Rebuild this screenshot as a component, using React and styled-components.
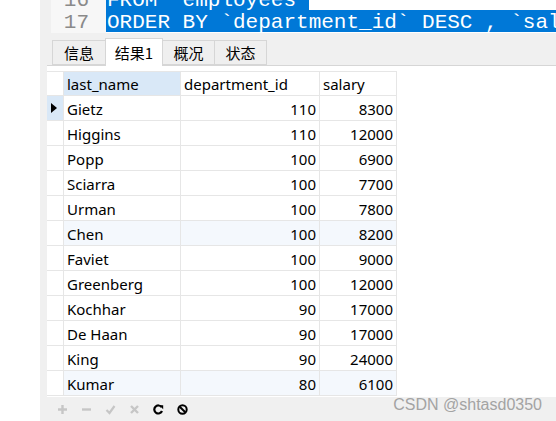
import React from "react";
import styled, { createGlobalStyle } from "styled-components";

const Global = createGlobalStyle`
  html, body { margin: 0; padding: 0; background: #ffffff; overflow: hidden; }
  #root { width: 556px; height: 421px; }
`;

const Page = styled.div`
  position: relative;
  display: flex;
  width: 556px;
  height: 421px;
  overflow: hidden;
  font-family: "Noto Sans", "Noto Sans CJK SC", sans-serif;
`;

const LeftPane = styled.div`
  width: 40px;
  flex: none;
  background: #ffffff;
`;

const MainPane = styled.div`
  flex: 1;
  min-width: 0;
  display: flex;
  flex-direction: column;
  background: #f0f0f0;
  padding-left: 7px;
`;

const Editor = styled.div`
  height: 33px;
  flex: none;
  margin-left: 4px;
  display: flex;
  overflow: hidden;
  background: #ffffff;
  font-family: "Liberation Mono", monospace;
  font-size: 21px;
`;

const Gutter = styled.div`
  width: 55px;
  flex: none;
  background: #f7f7f7;
  color: #8a8a8a;
  text-align: right;
  padding-right: 17px;
  box-sizing: border-box;
  margin-top: -12px;
`;

const Code = styled.div`
  flex: 1;
  min-width: 0;
  margin-top: -12px;
`;

const Line = styled.div`
  height: 22px;
  line-height: 25px;
  white-space: pre;
`;

const Sel = styled.span`
  display: inline-block;
  height: 22px;
  padding-left: 1px;
  background: #0078d7;
  color: #ffffff;
  ${(p) => (p.$full ? "width: 100%;" : "")}
`;

const TabBar = styled.div`
  height: 33px;
  flex: none;
  display: flex;
  align-items: flex-end;
  padding-left: 6px;
  border-bottom: 1px solid #d6d6d6;
  box-sizing: border-box;
  font-family: "Noto Sans CJK SC", sans-serif;
  font-size: 15px;
  color: #000;
`;

const Tab = styled.div`
  width: ${(p) => p.$w}px;
  height: ${(p) => (p.$active ? "28px" : "25px")};
  margin-bottom: ${(p) => (p.$active ? "-1px" : "0")};
  display: flex;
  align-items: center;
  justify-content: center;
  box-sizing: border-box;
  background: ${(p) => (p.$active ? "#ffffff" : "#efefef")};
  border: 1px solid #d6d6d6;
  border-bottom: ${(p) => (p.$active ? "none" : "1px solid #d6d6d6")};
  margin-left: -1px;
  white-space: nowrap;
`;

const Results = styled.div`
  flex: 1;
  min-height: 0;
  background: #ffffff;
  padding-top: 5px;
  overflow: hidden;
`;

const Row = styled.div`
  display: grid;
  width: max-content;
  grid-template-columns: 17px 117px 139px 77px;
  height: 25px;
  background: ${(p) => (p.$tint ? "#f4f8fd" : "#ffffff")};
`;

const Cell = styled.div`
  box-sizing: border-box;
  border-right: 1px solid #e6e6e6;
  border-bottom: 1px solid #e6e6e6;
  padding: 2px 3px 0;
  display: flex;
  align-items: center;
  justify-content: ${(p) => (p.$num ? "flex-end" : "flex-start")};
  font-size: 15px;
  color: #000;
  white-space: nowrap;
  overflow: hidden;
  background: ${(p) => (p.$hl ? "#d9e8f7" : "transparent")};
`;

const HeadCell = styled(Cell)`
  border-top: 1px solid #e6e6e6;
  padding-top: 0;
`;

const Indicator = styled(Cell)`
  padding: 0;
  justify-content: center;
  background: ${(p) => (p.$hl ? "#d9e8f7" : "#ffffff")};
`;

const Arrow = styled.span`
  width: 0;
  height: 0;
  border-top: 5px solid transparent;
  border-bottom: 5px solid transparent;
  border-left: 6px solid #000;
  margin-left: -2px;
`;

const Toolbar = styled.div`
  height: 24px;
  flex: none;
  display: flex;
  align-items: center;
  padding-left: 3px;
`;

const ToolButton = styled.div`
  width: 24px;
  height: 24px;
  display: flex;
  align-items: center;
  justify-content: center;
  color: ${(p) => (p.$enabled ? "#000000" : "#c6c6c6")};
`;

const Watermark = styled.div`
  position: absolute;
  right: 14px;
  bottom: 7px;
  font-family: "Liberation Sans", Arial, sans-serif;
  font-size: 16px;
  color: #a3a3a3;
  pointer-events: none;
`;

const rows = [
  ["Gietz", 110, 8300],
  ["Higgins", 110, 12000],
  ["Popp", 100, 6900],
  ["Sciarra", 100, 7700],
  ["Urman", 100, 7800],
  ["Chen", 100, 8200],
  ["Faviet", 100, 9000],
  ["Greenberg", 100, 12000],
  ["Kochhar", 90, 17000],
  ["De Haan", 90, 17000],
  ["King", 90, 24000],
  ["Kumar", 80, 6100],
];

const PlusIcon = () => (
  <svg width="11" height="11" viewBox="0 0 11 11">
    <path d="M5.5 1v9M1 5.5h9" stroke="currentColor" strokeWidth="2.4" />
  </svg>
);
const MinusIcon = () => (
  <svg width="11" height="11" viewBox="0 0 11 11">
    <path d="M1 5.5h9" stroke="currentColor" strokeWidth="2.4" />
  </svg>
);
const CheckIcon = () => (
  <svg width="11" height="11" viewBox="0 0 11 11">
    <path d="M1.5 6l3 3 5-7" stroke="currentColor" strokeWidth="2.2" fill="none" />
  </svg>
);
const CrossIcon = () => (
  <svg width="11" height="11" viewBox="0 0 11 11">
    <path d="M2 2l7 7M9 2l-7 7" stroke="currentColor" strokeWidth="2.4" />
  </svg>
);
const RefreshIcon = () => (
  <svg width="11" height="11" viewBox="0 0 11 11">
    <path d="M8.6 3.2A4 4 0 1 0 9 7" stroke="currentColor" strokeWidth="2.2" fill="none" />
    <path d="M6.2 1.2h4v4z" fill="currentColor" />
  </svg>
);
const StopIcon = () => (
  <svg width="11" height="11" viewBox="0 0 11 11">
    <circle cx="5.5" cy="5.5" r="4.2" stroke="currentColor" strokeWidth="2" fill="none" />
    <path d="M2.7 2.7l5.6 5.6" stroke="currentColor" strokeWidth="2" />
  </svg>
);

export default function App() {
  return (
    <>
      <Global />
      <Page>
        <LeftPane />
        <MainPane>
          <Editor>
            <Gutter>
              <Line>16</Line>
              <Line>17</Line>
            </Gutter>
            <Code>
              <Line>
                <Sel>FROM `employees`</Sel>
              </Line>
              <Line>
                <Sel $full>ORDER BY `department_id` DESC , `salary` ASC</Sel>
              </Line>
            </Code>
          </Editor>
          <TabBar>
            <Tab $w={54}>信息</Tab>
            <Tab $active $w={58}>结果1</Tab>
            <Tab $w={53}>概况</Tab>
            <Tab $w={53}>状态</Tab>
          </TabBar>
          <Results>
            <Row>
              <Indicator as={HeadCell} />
              <HeadCell $hl>last_name</HeadCell>
              <HeadCell>department_id</HeadCell>
              <HeadCell>salary</HeadCell>
            </Row>
            {rows.map(([name, dept, sal], i) => (
              <Row key={name} $tint={i === 5 || i === 11}>
                <Indicator $hl={i === 0}>{i === 0 && <Arrow />}</Indicator>
                <Cell>{name}</Cell>
                <Cell $num>{dept}</Cell>
                <Cell $num>{sal}</Cell>
              </Row>
            ))}
          </Results>
          <Toolbar>
            <ToolButton><PlusIcon /></ToolButton>
            <ToolButton><MinusIcon /></ToolButton>
            <ToolButton><CheckIcon /></ToolButton>
            <ToolButton><CrossIcon /></ToolButton>
            <ToolButton $enabled><RefreshIcon /></ToolButton>
            <ToolButton $enabled><StopIcon /></ToolButton>
          </Toolbar>
        </MainPane>
        <Watermark>CSDN @shtasd0350</Watermark>
      </Page>
    </>
  );
}
